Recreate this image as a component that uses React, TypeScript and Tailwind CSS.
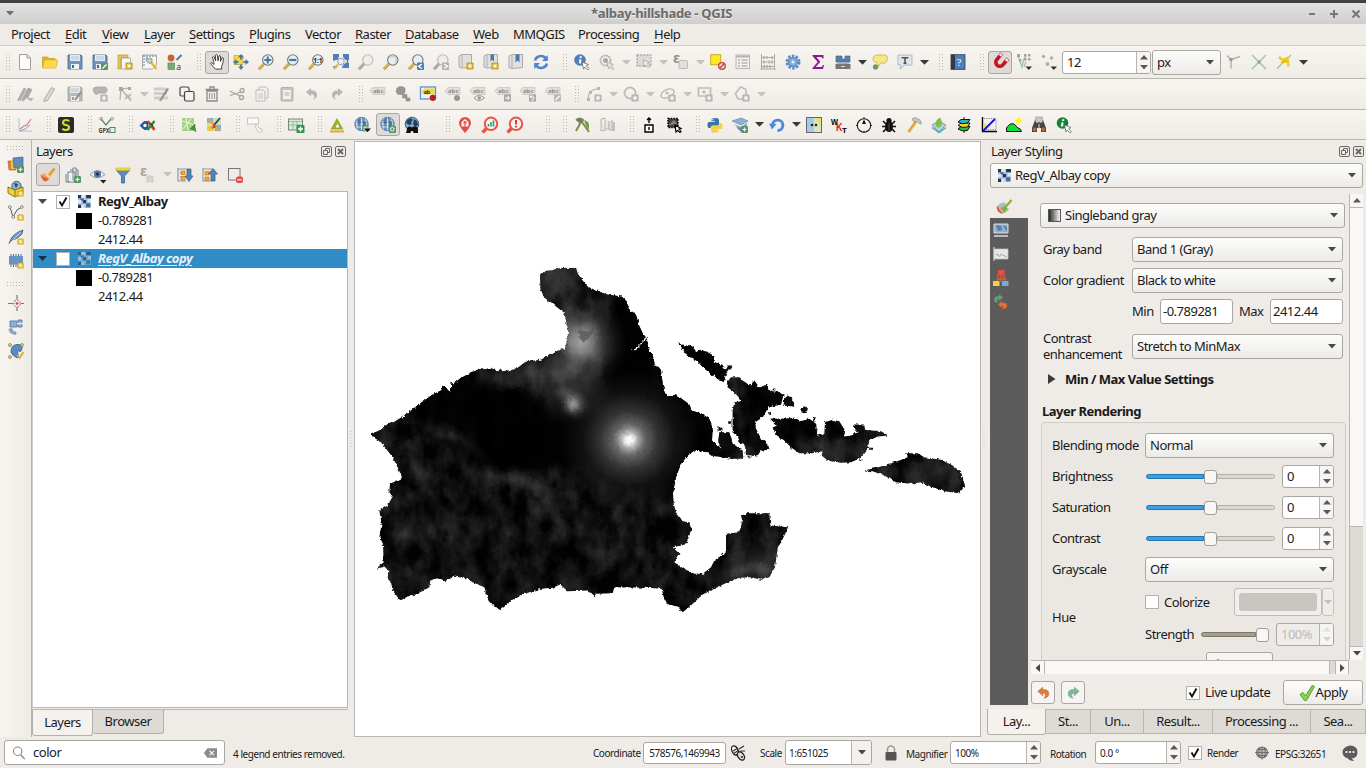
import React from "react";

const star = (c = "#c9a51c", x = 12, y = 12) => (
  <g>
    <rect x={x - 3.6} y={y - 3.6} width="7.2" height="7.2" rx="1.2" fill={c} />
    <path d={`M${x - 2.3} ${y}h4.6M${x} ${y - 2.3}v4.6M${x - 1.6} ${y - 1.6}l3.2 3.2M${x + 1.6} ${y - 1.6}l-3.2 3.2`} stroke="#fff" strokeWidth=".9" />
  </g>
);
const plus = (
  <g>
    <rect x="9" y="9" width="7" height="7" rx="1.2" fill="#5a9368" />
    <path d="M10.5 12.5h4M12.5 10.5v4" stroke="#fff" strokeWidth="1.2" />
  </g>
);
const yBox = <rect x="10" y="10" width="5" height="5" rx=".6" fill="#f6e788" stroke="#c9a317" strokeWidth="1.2" />;
const lens = (fill: string, handle: string, rim: string) => (
  <g>
    <path d="M1 15.2L6 9.8" stroke="#777" strokeWidth="2.6" />
    <path d="M1 15L5.6 10.2" stroke={handle} strokeWidth="1.7" />
    <circle cx="9.8" cy="6" r="5.2" fill={fill} stroke={rim} strokeWidth="1.1" />
  </g>
);
const zoomL = lens("#e9eef2", "#f0c020", "#777");
const greyL = lens("#efedea", "#b9b7b4", "#bdbbb8");
const cursor = (x: number, y: number, f = "#fff", s = "#666") => (
  <path transform={`translate(${x} ${y})`} d="M0 0l6.5 2.6-2.4 1.1 2.9 3-1.3 1.3-3-3L1.500 7z" fill={f} stroke={s} strokeWidth=".8" />
);
const arrows4 = (c: string) => (
  <g fill={c}>
    <path d="M8 0l3 3.500H9v2H7v-2H5zM8 16l3-3.500H9v-2H7v2H5zM0 8l3.500-3v2h2v2h-2v2zM16 8l-3.500-3v2h-2v2h2v2z" />
  </g>
);
const floppy = (c: string, d: string) => (
  <g>
    <path d="M1 1h13l1 1v13H1z" fill={c} stroke={d} strokeWidth=".8" />
    <rect x="3" y="1" width="10" height="6" fill="#e6ebf0" />
    <path d="M4 3h8M4 5h8" stroke="#aeb9c4" strokeWidth=".8" />
    <rect x="4" y="10" width="8" height="5" fill="#f1f1f1" />
    <rect x="5" y="11" width="2" height="3" fill={d} />
  </g>
);
const tag = (c = "#e1dfdc") => (
  <g>
    <path d="M0 5l3-3.500h12v7H3z" fill={c} stroke="#c3c1be" strokeWidth=".7" />
    <text x="3" y="7.300" fontSize="6" fontWeight="bold" fill="#8d8b88" fontFamily="Noto Sans" letterSpacing="0">abc</text>
  </g>
);
const globe = (
  <g>
    <circle cx="7.500" cy="7" r="7" fill="#5e8fc1" />
    <path d="M7.500 0v14M1 4h13M.5 7h14M1 10h13M4 1q-3 6 0 12M11 1q3 6 0 12" stroke="#d9e5f0" strokeWidth=".9" fill="none" />
    <path d="M3 3l3-1 1 3-2 4zM8.500 3l3 1 1 4-3 2z" fill="#4c5f70" opacity=".75" />
    <circle cx="7.500" cy="7" r="6.700" fill="none" stroke="#41617f" strokeWidth=".6" />
  </g>
);
const world = (
  <g>
    <circle cx="8" cy="7" r="6.800" fill="#87abd0" stroke="#294361" strokeWidth=".8" />
    <path d="M3 3l4-2 2 2-2 2 1 2-3 1-3-2zM10 2l3 2 1 4-3 2-2-3z" fill="#25405e" />
  </g>
);
const pin = (
  <g>
    <path d="M8 0a6 6 0 0 1 6 6C14 9.800 8 16 8 16S2 9.800 2 6A6 6 0 0 1 8 0z" fill="#de5046" />
    <path d="M8 2l3.500 3v4.500h-7V5z" fill="#fff" opacity=".9" />
    <path d="M8 4v5.500M6.500 6L8 4.500 9.500 6" stroke="#de5046" strokeWidth="1.200" fill="none" />
  </g>
);
const redLens = (
  <g>
    <path d="M.5 15.500l5-5" stroke="#e9544b" strokeWidth="3.400" />
    <circle cx="9" cy="6.800" r="6.200" fill="#f7f3f2" stroke="#e9544b" strokeWidth="2" />
  </g>
);
const gs = "#b8b6b3";
const bino = (c: string, y = 0) => (
  <g transform={`translate(0 ${y})`}>
    <path d="M4 3h3l1 2 1-2h3l3 8v4h-5v-4H6v4H1v-4z" fill={c} />
    <circle cx="3.700" cy="12.500" r="1.900" fill="#b86a37" /><circle cx="12.300" cy="12.500" r="1.900" fill="#b86a37" />
  </g>
);

const icons: Record<string, React.ReactNode> = {
  new: <path d="M2.500.500h7.500l3.500 3.500v11.500h-11zM10 .5v3.500h3.500" fill="#fcfcfb" stroke="#a2a09d" strokeWidth="1" />,
  open: <><path d="M.5 14V3h5l1.500 1.500h6V6" fill="#e0b32c" stroke="#c99f20" strokeWidth=".8" /><path d="M.5 14L2.500 6H15.500l-1.700 8z" fill="#ffd94d" stroke="#dcb32e" strokeWidth=".8" /></>,
  save: floppy("#6d96c3", "#45668b"),
  saveas: <>{floppy("#6d96c3", "#45668b")}<rect x="9" y="9" width="7" height="7" rx="1" fill="#5a9368" /><path d="M10.500 14.500l4-4" stroke="#fff" strokeWidth="1.300" /></>,
  layout: <><path d="M1 1h10v3H4v11H1z" fill="#e2c55d" stroke="#b08d20" strokeWidth=".6" /><path d="M4.500 4h9v11h-9z" fill="#f6f6f6" stroke="#999" strokeWidth=".7" />{star()}</>,
  layoutman: <><path d="M.5 1h14v10l-4 4H.5z" fill="#f5f5f4" stroke="#9b9a98" strokeWidth=".8" /><path d="M1 2h13M2 1v12" stroke="#7ba0c8" strokeWidth="1.300" strokeDasharray="2 1" /><path d="M8 7l6.500 8" stroke="#e3ba37" strokeWidth="2.600" /><path d="M5 3l1 2.500 2-1.500 2 1v3L8 9.500 5 8 4 5z" fill="#cfcfcf" stroke="#777" strokeWidth=".7" /></>,
  style: <><circle cx="4" cy="4" r="3.400" fill="#cc6138" /><path d="M9.500 6l5-5" stroke="#4a79ad" strokeWidth="1.900" /><rect x="1" y="9" width="6.500" height="6.500" fill="#7fa86e" stroke="#5b8a65" strokeWidth=".7" /><text x="9.300" y="15.500" fontSize="8.500" fontFamily="Noto Sans" fill="#333">a</text></>,
  hand: <path d="M5 9L3.500 3q1-1.300 1.900 0L6.600 7 6.500 1.200q1-1.200 1.900 0L9 7l.9-5q1-.9 1.700.2L11.500 7.500l1.400-3.700q1-.6 1.500.3 0 5-1.700 8v3H6.500L1.300 9.500q.6-1.300 1.900-.5L5 10.500z" fill="#fff" stroke="#333" strokeWidth=".9" />,
  panfeat: <><path d="M1 1.500h9v9H1z" fill="#f3d844" stroke="#b99c17" strokeWidth=".6" />{arrows4("#4e78ab")}</>,
  zin: <>{zoomL}<path d="M6.300 6h7M9.800 2.500v7" stroke="#4677ad" strokeWidth="2.100" /></>,
  zout: <>{zoomL}<path d="M6.300 6h7" stroke="#4677ad" strokeWidth="2.300" /></>,
  z11: <>{zoomL}<text x="5.200" y="8.600" fontSize="6.500" fontWeight="bold" fontFamily="Noto Sans" fill="#222" letterSpacing="0">1:1</text></>,
  zfull: <><path d="M1 1h13.500v12H1z" fill="none" stroke="#4e7fb7" strokeWidth="1.500" strokeDasharray="4 5" /><path d="M0 0h6v2.500L4.500 6H0zM10 0h6v6h-3.500L10 3zM16 14h-5.500l-.5-3 2.500-2H16z" fill="#4e7fb7" /><path d="M1 15l4-4.500" stroke="#e2b92b" strokeWidth="1.900" /><circle cx="8" cy="7.500" r="3.300" fill="#e9eef2" stroke="#888" strokeWidth=".8" /></>,
  zsel: <>{greyL}</>,
  zlayer: <>{zoomL}<path d="M6.500 3h6.500v6" fill="none" stroke="#b9c4cc" /></>,
  zlast: <>{zoomL}<rect x="9" y="8.500" width="7" height="7.500" rx=".8" fill="#4e7fb7" /><path d="M14 10l-3.500 2.200L14 14.500" fill="none" stroke="#fff" strokeWidth="1.300" /></>,
  znext: <>{greyL}<rect x="9" y="8.500" width="7" height="7.500" rx=".8" fill="#b5b3b0" /><path d="M11 10l3.500 2.200L11 14.500" fill="none" stroke="#fff" strokeWidth="1.300" /></>,
  newmap: <><path d="M1 2l3-1.500h9.500v13L4 14 1 13z" fill="#dfe1e1" stroke="#a3a3a1" strokeWidth=".9" /><path d="M4 1v12" stroke="#a3a3a1" strokeWidth=".8" />{star()}</>,
  newbook: <><path d="M1 2l3-1.500h10.500v13L4 14 1 13z" fill="#dfe1e1" stroke="#a3a3a1" strokeWidth=".9" /><path d="M4 1v12" stroke="#a3a3a1" strokeWidth=".8" /><path d="M7.500.5h3.500v7L9.200 5.800 7.500 7.500z" fill="#4677ad" />{star()}</>,
  books: <><path d="M1 2l3-1.500h10.500v13L4 14.500 1 13.500z" fill="#dfe1e1" stroke="#a3a3a1" strokeWidth=".9" /><path d="M4 1v13" stroke="#a3a3a1" strokeWidth=".8" /><path d="M7.500.5h4v8L9.500 6.500 7.500 8.500z" fill="#4677ad" /></>,
  refresh: <><path d="M2 6.500A6 5.500 0 0 1 12.500 4M14 9.500A6 5.500 0 0 1 3.500 12" fill="none" stroke="#4c86c6" strokeWidth="2.600" /><path d="M14.800 1v6H9zM1.200 15V9H7z" fill="#4c86c6" /></>,
  ident: <><circle cx="6" cy="6" r="5.800" fill="#4c80b7" /><path d="M6.700 2.300v1.600M6.200 5.300v4.300" stroke="#fff" strokeWidth="2" />{cursor(8, 8)}</>,
  action: <><circle cx="6.500" cy="6.500" r="5" fill="none" stroke={gs} strokeWidth="2" strokeDasharray="2 .6" /><circle cx="6.500" cy="6.500" r="2.500" fill="#a9a7a4" />{cursor(8, 8, "#e5e3e0", "#a9a7a4")}</>,
  select: <><rect x="1" y="1" width="14" height="11" fill="#dddbd8" stroke="#aaa8a5" strokeWidth="1.300" strokeDasharray="2 1.200" />{cursor(7, 6, "#f3f1ee", "#a5a3a0")}</>,
  eps: <><text x="0" y="9" fontSize="14" fontWeight="bold" fontFamily="Noto Sans" fill="#93918e">ε</text><rect x="6" y="6.500" width="8.500" height="8" rx="1" fill="#e1dfdc" stroke="#bebcb9" /></>,
  desel: <><rect x=".7" y=".7" width="10" height="10" fill="#ffe62e" stroke="#c5a915" strokeWidth=".9" /><circle cx="12" cy="12" r="3.300" fill="#f3dada" stroke="#d23b3b" strokeWidth="1.300" /><path d="M9.800 14.200l4.400-4.400" stroke="#d23b3b" strokeWidth="1.300" /></>,
  table: <><rect x="1" y="1" width="13.500" height="13.500" fill="#f2f0ed" stroke={gs} /><path d="M1 2.500h13" stroke={gs} strokeWidth="2" /><path d="M3 6h2M6.500 6h6M3 9h2M6.500 9h6M3 12h2M6.500 12h6" stroke={gs} strokeWidth="1.500" /></>,
  abacus: <><path d="M1.500 0v16M14.500 0v16M1 3.500h14M1 8h14M1 12.500h14M.5 15h15" stroke="#aaa8a5" strokeWidth="1" fill="none" /><path d="M4 2v3M7 2v3M12 2v3M4 6.500v3M9 6.500v3M12 6.500v3M4 11v3M7 11v3M10 11v3" stroke="#bab8b5" strokeWidth="1.900" /></>,
  gear: <><circle cx="8" cy="8" r="6" fill="none" stroke="#5d8fc6" strokeWidth="3" strokeDasharray="2.500 1.270" /><circle cx="8" cy="8" r="4.500" fill="#85acd8" stroke="#5d8fc6" strokeWidth="1.500" /><circle cx="8" cy="8" r="1.500" fill="#eee" /></>,
  sigma: <path d="M2.500 1h11v3.500h-1l-1-1.500H6.300l4 4.700-4.600 5.300h6l1.300-2h1L13 15H2.500v-1l5.200-6-5.200-6z" fill="#8d1b8f" />,
  toolbox: <><path d="M1 2h6v3h3V2h5v6H1z" fill="#5880ab" stroke="#3d5c80" strokeWidth=".6" /><path d="M2 8h12v2H2z" fill="#9cb5cf" /><rect x=".5" y="10" width="15" height="5" fill="#777" /><path d="M6 12.500h4" stroke="#ddd" /></>,
  tip: <><path d="M4 1h9q2.500.5 2.500 3.500T13 9H9l-3 4-.5-4.200Q1 8 1 5t3-4z" fill="#f7e78b" stroke="#cbb84f" strokeWidth=".9" /><circle cx="3.500" cy="13" r="2.300" fill="#6b9a6b" stroke="#4d7a4d" strokeWidth=".6" /></>,
  textann: <><path d="M1 1h14v10H8l-5 4 1-4H1z" fill="#dfe6ee" stroke="#aab4c0" strokeWidth=".9" /><path d="M4.500 3.700h7M8 4v5.500M6.500 9.300h3" stroke="#555" strokeWidth="1.600" /></>,
  help: <><rect x="1" y=".7" width="14" height="14.600" fill="#4e7fb7" stroke="#303a48" strokeWidth=".8" /><rect x="1" y=".7" width="4" height="14.600" fill="#303a48" /><text x="6.500" y="12" fontSize="11" fontFamily="Liberation Serif" fill="#fff">?</text></>,
  magnet: <g transform="rotate(40 8 8)"><path d="M4 3v5.300a4 4 0 0 0 8 0V3" fill="none" stroke="#c41420" strokeWidth="3.600" /><path d="M4 .8v2.500M12 .8v2.500" stroke="#e9e6e6" strokeWidth="3.200" /><path d="M2.200 3V.6h3.600V3M10.200 3V.6h3.600V3" fill="none" stroke="#c46" strokeWidth=".7" /></g>,
  snapv: <><path d="M2 2l4 11 2-8 2-3" fill="none" stroke="#9cc3a1" strokeWidth="1.300" /><path d="M8 13l2-5" stroke="#9cc3a1" strokeWidth="1.300" /><g fill="#a5a3a0"><path d="M1 0h3v3H1zM3 5h2.500v2.500H3zM8 0h2.500v2.500H8zM12 0h2.500v2.500H12zM8 4h2.500v2.500H8zM12 4h2.500v2.500H12z" /></g><path d="M9.500 12.500h6.500l-3.200 3.500z" fill="#333" /></>,
  dots: <><g fill="#b0aeab"><circle cx="2.500" cy="2.500" r="1.700" /><circle cx="10.500" cy="4" r="1.700" /><circle cx="6.500" cy="10" r="1.900" /></g><path d="M9.500 12.500h6.500l-3.200 3.500z" fill="#333" /></>,
  topo: <><path d="M1 1.500l4 4v9M5 5.500l9-3" fill="none" stroke="#9cc3a1" strokeWidth="1.500" /><circle cx="5" cy="5.500" r="1.800" fill="#999" /></>,
  cross: <><path d="M1 1l14 14M15 1L1 15" stroke="#9fc9a5" strokeWidth="1.500" /><circle cx="8" cy="8" r="1.700" fill="#999" /></>,
  crossy: <><path d="M1 14.500L15 1" stroke="#9fc9a5" strokeWidth="1.500" /><path d="M3 3l3.500 3 5-2 1 8.500" fill="none" stroke="#f0cb18" strokeWidth="2.400" /><path d="M4 9l5-4 3 3-4 1z" fill="#e6b90e" /></>,

  pencils: <><path d="M1 13.500L7 2l2 1-5.500 11L1 15zM5 13.500L11 2l2 1-5.500 11L5 15zM8.500 11L12.500 2.500l2.500 1-4.500 9z" fill="#b3b1ae" stroke="#a09e9b" strokeWidth=".6" /><path d="M10 12h7l-3.500 3.500z" fill="#b8b6b3" /></>,
  pencil: <path d="M2 13.500L9.500 1.500l3 1.500-7 11.500L2 15.500z" fill="#dcdad7" stroke="#aaa8a5" strokeWidth="1" />,
  gsave: <>{floppy("#bbb9b6", "#a09e9b")}<path d="M8 14l6-8" stroke="#8e8c89" strokeWidth="2" /></>,
  addpoly: <><path d="M1 4q0-3 4-3h8q3 1 2 4t-4 2H7q-2 2-4 1z" fill="#b7b5b2" stroke="#a3a19e" strokeWidth=".7" />{star("#b5b3b0")}</>,
  vertex: <><path d="M3 14L4 3l9-1M4 3l10 12" fill="none" stroke="#b8b6b3" strokeWidth="1.300" /><path d="M2 1h4v4H2zM11 1h3v3h-3z" fill="#aaa8a5" /><path d="M7 6l4 3 4-2-2 4 2 3-4-2-4 2 2-4z" fill="#bcbab7" /></>,
  multi: <><path d="M0 3h12M0 7.500h13M0 12h14" stroke="#cfcdca" strokeWidth="3.200" /><path d="M5 15L13 2l2 1-8 12z" fill="#8e8c89" /></>,
  copy2: <><rect x="1" y="1" width="9" height="9" rx="1.500" fill="none" stroke="#444" strokeWidth="1.200" /><rect x="5.500" y="5.500" width="9.500" height="9.500" rx="1.500" fill="#f3f0ed" stroke="#444" strokeWidth="1.200" /></>,
  trash: <><path d="M3 5h10v10H3zM1.500 3.500h13M6 3V1h4v2" fill="none" stroke="#8d8b88" strokeWidth="1.300" /><path d="M5.500 7v6M8 7v6M10.500 7v6" stroke="#9b9996" strokeWidth="1.100" /></>,
  cut: <><path d="M1 5l10 5M1 9.500L12 6" stroke="#a5a3a0" strokeWidth="1.300" /><circle cx="13" cy="4.500" r="2" fill="none" stroke="#a5a3a0" strokeWidth="1.300" /><circle cx="12.500" cy="11.500" r="2" fill="none" stroke="#a5a3a0" strokeWidth="1.300" /></>,
  gcopy: <><path d="M5 1h7l2 2v9H5z" fill="#f3f0ed" stroke={gs} strokeWidth=".9" /><path d="M2 4h7l2 2v9H2z" fill="#f3f0ed" stroke={gs} strokeWidth=".9" /><path d="M4 8h5M4 10h5M4 12h5" stroke={gs} strokeWidth=".8" /></>,
  paste: <><rect x="2" y="1.500" width="12" height="13.500" rx="1" fill="#c5c3c0" stroke="#b3b1ae" /><rect x="4" y="4" width="8" height="9" fill="#f3f0ed" /><path d="M5.500 7h5M5.500 9h5M6 1.500h4" stroke="#b3b1ae" /></>,
  undo: <path d="M2 6l5-4v2.500q6-.5 6 4.500 0 3-4 5 2-3 1-4.500T7 8v2.500z" fill={gs} />,
  redo: <path d="M14 6L9 2v2.500Q3 4 3 9q0 3 4 5-2-3-1-4.500T9 8v2.500z" fill={gs} />,
  tagA: tag(),
  blobs: <><path d="M2 2l3-1.500 3 .5 2 1v4l-1.500 2.500H12v3.500h3v3h-4v-3H7.500V8.500H3L1 6z" fill="#999794" stroke="#8a8885" strokeWidth=".6" /></>,
  tagY: <><rect x=".5" y="1" width="15" height="12" fill="#f3f1ee" stroke="#5d8fd6" strokeWidth="1.300" /><path d="M1.500 6l3-3.500h10v6h-10z" fill="#efd93a" /><text x="3.500" y="8" fontSize="6" fontWeight="bold" fontFamily="Noto Sans" fill="#333">ab</text><circle cx="12.800" cy="11.800" r="3.100" fill="#b41f24" /></>,
  tagP: <>{tag()}<circle cx="12" cy="12" r="3" fill="#999794" /></>,
  tagE: <>{tag()}<path d="M4 12q5-5 10.500 0-5.500 5-10.500 0z" fill="#f1efec" stroke="#999794" /><circle cx="9.300" cy="12" r="1.700" fill="#999794" /></>,
  tagM: <>{tag()}<rect x="9" y="8.500" width="7" height="7" fill="#aaa8a5" /><path d="M10 12h4.500M12.500 10l2 2-2 2" stroke="#fff" fill="none" /></>,
  tagR: <>{tag()}<rect x="9" y="8.500" width="7" height="7" fill="#aaa8a5" /><path d="M10.500 11a2 2 0 1 1 1 3M10.500 9.500v2h2" stroke="#fff" fill="none" /></>,
  tagC: <>{tag()}<rect x="9" y="8.500" width="7" height="7" fill="#bab8b5" /><path d="M10.500 14l4-4" stroke="#fff" strokeWidth="1.300" /></>,
  curve: <><path d="M2 14Q2 3 12 3" fill="none" stroke={gs} strokeWidth="1.200" /><path d="M1 12h3v3H1zM3 5h3v3H3zM11 1h3v3h-3z" fill={gs} />{star("#b5b3b0")}</>,
  circ: <><circle cx="7" cy="7" r="5.500" fill="none" stroke="#bebcb9" strokeWidth="1.800" />{star("#b5b3b0")}</>,
  ell: <><ellipse cx="7.500" cy="7.500" rx="7" ry="4" transform="rotate(-25 7.500 7.500)" fill="none" stroke={gs} strokeWidth="1.300" /><circle cx="7" cy="7" r="1.500" fill={gs} />{star("#b5b3b0")}</>,
  rect: <><path d="M1.500 2h12v8H1.500z" fill="none" stroke="#bebcb9" strokeWidth="1.700" /><circle cx="7" cy="6" r="1.600" fill={gs} />{star("#b5b3b0")}</>,
  pent: <><path d="M6.500 1l5 2 1 5-4 5H4L1.500 7.500z" fill="none" stroke="#bebcb9" strokeWidth="1.700" />{star("#b5b3b0")}</>,

  plot: <><path d="M2 1v13h13" fill="none" stroke="#aeb7c6" strokeWidth=".9" /><path d="M3 12l4-3 3-1 4-6" fill="none" stroke="#e3757d" strokeWidth="1.200" /><path d="M3 14q5-1 10-6" fill="none" stroke="#9b8fd8" strokeWidth="1" /></>,
  s: <><rect width="16" height="16" rx="2" fill="#2b2b2b" /><path d="M11 4.500Q10.500 3 8 3T5 5.400Q5 7.500 8 8t3 2.600Q11 13 8 13t-3.300-1.500" fill="none" stroke="#d3da21" strokeWidth="2.200" /></>,
  gpx: <><path d="M2 2l5 6 5-6" fill="none" stroke="#568a5e" strokeWidth="1.300" /><circle cx="2" cy="1.700" r="1.400" fill="none" stroke="#888" strokeWidth=".8" /><circle cx="13" cy="1.700" r="1.400" fill="none" stroke="#888" strokeWidth=".8" /><text x="-.5" y="15.500" fontSize="6.500" fontWeight="bold" fontFamily="Noto Sans" fill="#444" letterSpacing="0" textLength="11" lengthAdjust="spacingAndGlyphs">GPX</text><rect x="11" y="10.500" width="5" height="5" fill="#e8f2e8" stroke="#4e8a55" /></>,
  gcx: <><path d="M0 8.500l4-4h4v8H4z" fill="#1c5aa5" stroke="#123a6a" strokeWidth=".6" /><circle cx="5" cy="8.500" r="1.700" fill="#fff" /><path d="M7.500 4l7 9" stroke="#d83b2d" strokeWidth="2.600" /><path d="M14.500 4l-7 9" stroke="#2a8c3a" strokeWidth="2.400" /><path d="M10 5.500l4 5" stroke="#222" strokeWidth=".8" /></>,
  mapg: <><path d="M1 1h12v13H1z" fill="#a9d088" /><path d="M1 4l12 4M5 1l2 12M10 2L2 12" stroke="#e6f1d8" strokeWidth="1.200" /><path d="M9 12l5-5v3l1 5-2-2z" fill="#3d9440" stroke="#2d6f30" strokeWidth=".5" /></>,
  mapc: <><path d="M1 1h14v13H1z" fill="#cfe0b8" /><path d="M1 1h6v5H1zM9 8h6v6H9z" fill="#7fb2e2" /><path d="M1 9h6v5H1z" fill="#f0c648" /><path d="M2 2l12 12M12 4L5 11" stroke="#f5a03a" strokeWidth="2" /><path d="M14 1L8 8" stroke="#2c3e66" strokeWidth="1.700" /><path d="M8 7l2 3-4 2z" fill="#c0392b" /></>,
  rectp: <><rect x=".5" y="1" width="11" height="6" fill="#fbfaf9" stroke="#c1bfbc" strokeWidth=".9" /><path d="M9 7l3 4 3 1v3h-4l-3-5z" fill="#f3f1ee" stroke="#c1bfbc" strokeWidth=".8" /></>,
  grid: <><rect x=".5" y="2" width="14" height="11" fill="#d9ead9" stroke="#6d7d6d" strokeWidth=".9" /><path d="M1 4.500h13M1 8h13M5 5v8M9 5v8" stroke="#8fb295" strokeWidth=".8" /><rect x="8.500" y="8" width="8" height="8" rx="1" fill="#2f9a45" /><path d="M10 12h5M12.500 9.500v5" stroke="#fff" strokeWidth="1.500" /></>,
  tri: <><path d="M8 1l6.500 11.500h-13z" fill="#8fb324" /><path d="M8.500 6.500l2 4h-4z" fill="#fff" /><path d="M1 14.500h14" stroke="#e8a33c" strokeWidth="2" /></>,
  globe1: <>{globe}<rect x="9" y="9" width="5" height="5" fill="#bcd6bc" stroke="#4e8a55" strokeWidth=".8" /><path d="M10 11.500h7l-3.500 3.500z" fill="#111" /></>,
  globe2: <>{globe}<rect x="9" y="9" width="7" height="7" rx="1" fill="#5a9368" /><circle cx="12.300" cy="12.300" r="1.800" fill="none" stroke="#fff" /></>,
  globe3: <>{world}<path d="M3 12q0-3 3-2.500l2 1 2-1q4-.5 4 2.500v4h-4.500l-.5-2h-2l-.5 2H2z" fill="#111" /></>,
  pin,
  rl1: <>{redLens}<path d="M6.500 9.500V7M9 9.500V5M11.500 9.500V3.500" stroke="#2f9a6a" strokeWidth="1.600" /></>,
  rl2: <>{redLens}<path d="M9 3v4.500M9 8.800v1.600" stroke="#e23a31" strokeWidth="2" /></>,
  ham: <><path d="M1 3q4-3 7 0l-1 2 7 10M6 5L1 14" fill="none" stroke="#7c8d4a" strokeWidth="2" /><path d="M9 3q4 1 5 4v6l-3-4z" fill="#6fa04e" /><path d="M1 3l5-2 2 3-4 2z" fill="#777" /></>,
  map3: <><path d="M1 2l4-1v11h3l6 2v-9M1 2v12l5-1" fill="#e7e5e2" stroke={gs} /><path d="M9 4v9M12 3v10M14 5v8" stroke="#bbb9b6" strokeWidth="1.300" /></>,
  lockb: <><path d="M4 8h8v7H4z" fill="#fff" stroke="#000" strokeWidth="1.400" /><path d="M8 6V1M6 3l2-2 2 2M8 10v3" stroke="#000" strokeWidth="1.400" fill="none" /></>,
  selb: <><path d="M2 1.500h10v9H2z" fill="#444" stroke="#000" strokeWidth="1.500" strokeDasharray="1.500 1.200" /><path d="M3 8l5-5 3 4z" fill="#888" /><path d="M9 8l6 3.500-2 .5 2 2.500-1 1-2.500-2L10 15z" fill="#fff" stroke="#000" strokeWidth="1.200" /></>,
  python: <><path d="M8 1q4 0 4 2v4q0 1.500-1.500 1.500h-5Q3.500 8.500 3.500 11H2Q.5 11 .5 8T2 5h6V4.300H4.500V3q0-2 3.500-2z" fill="#3a73a8" /><path d="M8 15.500q-4 0-4-2V10.500Q4 9 5.500 9h5Q12.500 9 12.500 6H14q1.500 0 1.500 3T14 12H8v.6h3.500V14q0 1.500-3.500 1.500z" fill="#f5cf46" /><circle cx="6" cy="2.800" r=".7" fill="#fff" /></>,
  layersp: <><path d="M0 4l9-3 7 3-7 4z" fill="#8fb0d2" stroke="#5f83a9" strokeWidth=".6" /><path d="M2 7l7 3 6-4v2l-6 5z" fill="#7d9cbd" /><path d="M4 10l5 5 4-3" fill="#6d8cad" />{plus}</>,
  undob: <><path d="M3.500 8A5.200 5.200 0 1 1 8.500 13.500" fill="none" stroke="#4a8be0" strokeWidth="2.900" /><path d="M0 6.500l7.500.5L3 12.500z" fill="#4a8be0" /></>,
  split: <><rect x=".5" y=".5" width="15" height="15" fill="#d8e6c0" stroke="#666" /><path d="M1 1h7v14H1z" fill="#a6cbe8" /><path d="M9 1h6v8z" fill="#e8e070" /><circle cx="6" cy="8" r="1.300" fill="#222" /><circle cx="10" cy="8" r="1.300" fill="#222" /></>,
  wkt: <g fontFamily="Liberation Sans" fontWeight="bold" letterSpacing="0"><text x="0" y="7.500" fontSize="9" textLength="7" lengthAdjust="spacingAndGlyphs" fill="#000">W</text><text x="5" y="13.500" fontSize="11" textLength="6.500" lengthAdjust="spacingAndGlyphs" fill="#e01414">K</text><text x="11" y="16" fontSize="8" fill="#000">T</text></g>,
  compass: <><circle cx="8" cy="8.500" r="6.700" fill="none" stroke="#222" strokeWidth="1.100" /><path d="M8 2.500l2 4.500H6z" fill="#111" /><path d="M8 0v2M14 8.500h2M0 8.500h2M8 14v2" stroke="#222" /></>,
  bug: <><ellipse cx="8" cy="9.500" rx="4" ry="5.500" fill="#111" /><circle cx="8" cy="3.500" r="2.600" fill="#111" /><path d="M2 4l3 3M14 4l-3 3M1 9.500H15M2 15l3.500-3.500M14 15l-3.500-3.500" stroke="#111" strokeWidth="1.600" /><path d="M8 6v8" stroke="#777" strokeWidth=".6" /></>,
  hammer: <><path d="M2.500 15L10 4.500" stroke="#e5a72f" strokeWidth="2.800" /><path d="M6 2l3-1.500 5 2.500 1.500 4-2-.5-2.500-2-3 .5z" fill="#c9cac8" stroke="#8b8b89" strokeWidth=".7" /></>,
  gl: <><path d="M1 8l7-4 7 4-7 7z" fill="#b4cfe0" stroke="#7a9fb5" /><path d="M1 10.500L8 15.500l7-5" fill="none" stroke="#5aa7b5" strokeWidth="1.500" /><path d="M5 9Q3 4 9 .5q4 6 0 9.500-2 1.500-4-1z" fill="#7cc04b" /></>,
  stack: <><path d="M8 0v16" stroke="#e01414" strokeWidth="1.300" /><g stroke="#111" strokeWidth="1"><path d="M2 12l3-2.500h9L11.500 13.500q-5 1.500-9.500-1.500z" fill="#25c04b" /><path d="M2 8.500L5 6h9l-2.500 4q-5 1.500-9.500-1.500z" fill="#f5d321" /><path d="M2 5l3-2.500h9L11.500 6Q6 8 2 5z" fill="#27b8c6" /></g></>,
  graph: <><path d="M1.500 0v14.500H16" fill="none" stroke="#000" strokeWidth="1.400" /><path d="M3 1.500h12v11H3" fill="none" stroke="#777" strokeWidth=".8" strokeDasharray="1.300 1" /><path d="M2 5l5 4-5 4z" fill="#e9e056" /><path d="M2 14L14 2" stroke="#1313e0" strokeWidth="1.800" /></>,
  hill: <><path d="M.5 14.500V11Q4 5.500 8 7l4 4q3 .5 3.500 3.500z" fill="#12dd35" stroke="#111" /><circle cx="12.500" cy="3.500" r="2" fill="#fff023" /><path d="M12.500 0v7M9 3.500h7M10 1l5 5M15 1l-5 5" stroke="#fff023" strokeWidth=".8" /></>,
  bino: <>{bino("#444")}<path d="M4.500 0h7v4l-1 2-2.500-1-2.500 1-1-2z" fill="#c5c5c5" stroke="#999" strokeWidth=".6" /><path d="M8 7v5" stroke="#ddd" strokeWidth="1" /></>,
  infog: <><circle cx="6.500" cy="6" r="5.800" fill="#17813a" /><path d="M7.200 2.300v1.700M6.500 5.300L6 9.500" stroke="#fff" strokeWidth="2.100" />{cursor(8.500, 8)}</>,

  lAdd: <><path d="M0 4h8v9H1z" fill="#e08034" stroke="#a9561c" strokeWidth=".6" /><path d="M3 3h9v9H3z" fill="#e9c63f" /><path d="M5 1l10-1v10l-9 1z" fill="#5c8bc0" stroke="#3d668f" strokeWidth=".7" />{plus}</>,
  lBox: <><circle cx="8.500" cy="5" r="4.700" fill="#8fb1d4" stroke="#2f4c6b" strokeWidth=".8" /><path d="M6 2l4 1-2 4z" fill="#25405e" /><path d="M0 6l7 3 8-3v6l-8 4-7-4z" fill="#f2d23b" stroke="#6b5a12" strokeWidth=".8" /><path d="M7 9v6" stroke="#6b5a12" strokeWidth=".8" />{yBox}</>,
  lVec: <><path d="M2 2l3 10 4-7 5-3" fill="none" stroke="#556" strokeWidth="1" /><g fill="#eee" stroke="#777" strokeWidth=".8"><circle cx="1.800" cy="2" r="1.400" /><circle cx="13.800" cy="2" r="1.400" /><circle cx="5.300" cy="12" r="1.400" /></g>{yBox}</>,
  lFeather: <><path d="M1 15Q3 5 15 1q0 5-6 8-3 2-5 2z" fill="#6f9bcb" stroke="#34567c" strokeWidth=".8" /><path d="M1 15L13 3" stroke="#dbe7f3" strokeWidth=".7" />{yBox}</>,
  lChip: <><path d="M3 1v13M5.500 1v13M8 1v13M10.500 1v13M13 1v13" stroke="#4e6f96" strokeWidth="1" /><rect x="1" y="3" width="14" height="8.500" fill="#6a93c4" />{yBox}</>,
  lCross: <><path d="M9 0v4.500M9 12v4M0 8.500h5M13 8.500h3" stroke="#7b7977" strokeWidth="1.200" /><circle cx="9" cy="8.500" r="3.300" fill="none" stroke="#d97b7b" strokeWidth="1.200" strokeDasharray="2 1" /><path d="M7.500 8.500h3M9 7v3" stroke="#d93b3b" strokeWidth="1.200" /></>,
  lPlot: <><path d="M2 2h7v6H2zM10 1h4v7h-4z" fill="#8fb0d2" stroke="#4e7095" strokeWidth=".8" /><path d="M9 4.500h6.500" stroke="#e3ecf4" strokeWidth="1.500" /><path d="M1 10q0 5 7 5.500L8 13l-3-.5-1-3z" fill="#8fa9c4" stroke="#6d8cad" strokeWidth=".6" /></>,
  lGeom: <><path d="M3 9Q3 2 9 1.500t5 4-3 2.500-1 4-6-1z" fill="#5c8bc0" stroke="#2f5684" strokeWidth=".8" /><g fill="#c8d27a" stroke="#7b8a32" strokeWidth=".7"><circle cx="2" cy="2" r="1.500" /><circle cx="14" cy="2" r="1.500" /><circle cx="2" cy="14" r="1.500" /></g><path d="M9 12l2.500 3L15.500 9" fill="none" stroke="#d2b02c" strokeWidth="1.900" /></>,

  brush: <><path d="M8.500 9L14.500 1.500" stroke="#dba52c" strokeWidth="2.800" /><path d="M0 8l6-2 5 4-4 4q-4 1-7-6z" fill="#f0a050" /><path d="M1 9l3 1 5 2-3 2.500q-3 0-5-5.500z" fill="#e35a48" /><path d="M6 6l5 4-1.500 1.500-5-4z" fill="#f5d98a" /></>,
  grp: <><path d="M5 3h8v11" fill="none" stroke="#6d7d86" /><path d="M3 5h7v10H3zM1 7v8h3M8 1h3v12H8z" fill="#edf1f2" stroke="#647680" strokeWidth=".9" />{plus}</>,
  eye: <><path d="M0 7.500Q7 0 15 7.500 7 14 0 7.500z" fill="#f5f5f4" stroke="#8b8987" strokeWidth=".9" /><circle cx="7.500" cy="7" r="3.600" fill="#537ba6" /><circle cx="7.500" cy="7" r="1.500" fill="#1c2e44" /><path d="M10 13h6.500l-3.200 3.500z" fill="#222" /></>,
  filter: <><path d="M1 3h14L9.500 9v7h-3V9z" fill="#5c8bc0" stroke="#3d668f" strokeWidth=".8" /><path d="M1 1h14v2.500H1z" fill="#f1dc4b" stroke="#c8b227" strokeWidth=".6" /></>,
  epsf: <><text x="0" y="9" fontSize="14" fontWeight="bold" fontFamily="Noto Sans" fill="#a5a3a0">ε</text><path d="M7 15V9h6v6h-2v-4H9v4z" fill="#dbd9d6" stroke="#c1bfbc" strokeWidth=".7" /></>,
  expand: <><path d="M1 2h9M1 1v13h8M3 6h4M3 10h4" fill="none" stroke="#8e9aa5" strokeWidth="1.200" /><path d="M4 4h4v3.500H4zM4 9.500h4V13H4z" fill="#f6a53a" stroke="#d17b16" strokeWidth=".7" /><path d="M10 2h4v7h2l-4 5.500L8 9h2z" fill="#5583b5" stroke="#34587f" strokeWidth=".7" /></>,
  collapse: <><path d="M1 2h9M1 1v13h8M3 6h4" fill="none" stroke="#8e9aa5" strokeWidth="1.200" /><path d="M3 4.500h4V8H3zM3 10h4v3.500H3z" fill="#f6a53a" stroke="#d17b16" strokeWidth=".7" /><path d="M9 14h4V7h2.500l-4.500-5.500L6.500 7H9z" fill="#5583b5" stroke="#34587f" strokeWidth=".7" /></>,
  remove: <><rect x="1.500" y="1.500" width="11.500" height="11.500" fill="#efece8" stroke="#777" /><rect x="9" y="9.500" width="7" height="6.500" rx="2" fill="#e5484a" /><path d="M10.500 12.800h4" stroke="#fff" strokeWidth="1.300" /></>,
  symb: <><path d="M1 7l5-3 4 2 2 6-6 3-4-2z" fill="#e7a09a" /><path d="M3 5l5-2 3 4-4 3z" fill="#8fc8cf" /><path d="M5 13l6-4 3 1-5 4z" fill="#e0cf75" /><path d="M9.500 8l6-7" stroke="#9aa83f" strokeWidth="2.300" /><path d="M5 9l4-2 3 3-4 4z" fill="#7ab05c" /><path d="M1 8l2 4 3 2" stroke="#d6483f" strokeWidth="1.500" fill="none" /></>,
  transp: <><path d="M1 2h14v9H1z" fill="#8fb0d2" stroke="#e7e7e7" strokeWidth=".9" /><path d="M3 3l5 1 1 4-4 1zM10 3l4 2v5z" fill="#5a7c9f" /><path d="M1 14h14" stroke="#ddd" strokeWidth="1.500" /></>,
  histo: <><path d="M1 3h14v10H1z" fill="#e7e6e4" stroke="#c7c6c4" strokeWidth=".7" /><path d="M1 1v14" stroke="#ddd" /><path d="M3 8l2 1 1.500 1.500L8.500 8l2 1.500L12 10l1.500 1" fill="none" stroke="#7f9aa8" strokeWidth=".9" /></>,
  rend: <><path d="M5.500 5L4 11M11 5l1.500 6M8.200 5v7M4 9h9" stroke="#c25f34" strokeWidth="1.800" fill="none" /><rect x="5" y="0" width="6.500" height="5" fill="#e64c4a" /><rect x="0" y="11" width="6.500" height="5" fill="#f3cf3a" /><rect x="9" y="11" width="6.500" height="5" fill="#75a8e3" /></>,
  hist: <><path d="M1 6q0-4 5-4V0l4 3.500L6 7V5Q3.500 5 4.500 9 1 8 1 6z" fill="#5f9e77" /><path d="M5 10.500l4-3.500v2q5-1 5 2.500t-5 3.500q2-3 0-3v2z" fill="#e0733a" stroke="#b9552a" strokeWidth=".5" /></>,
  undoO: <path d="M1 6.500L7 1.500v3q7.500-.5 7.500 5 0 4.500-6 5.500 3-3.500 1.500-5T7 8.800V12z" fill="#e2793c" stroke="#bc5c25" strokeWidth=".6" />,
  redoG: <path d="M15 6.500L9 1.500v3Q1.500 4 1.500 9.500q0 4.500 6 5.500-3-3.500-1.500-5T9 8.800V12z" fill="#80b894" stroke="#5b9873" strokeWidth=".6" />,
  check: <path d="M1 9.500L4 7.500l2.500 3.500L13 0.500l2.500 1L7.500 15.500H5.500z" fill="#8ed24f" stroke="#4c9a22" strokeWidth=".9" />,
  search: <><circle cx="6.500" cy="6" r="4.800" fill="none" stroke="#8b8987" strokeWidth="1.300" /><path d="M10 10l4.500 5" stroke="#8b8987" strokeWidth="1.700" /></>,
  clear: <><path d="M1 8l4-5.500h11v11H5z" fill="#8b8b8b" /><path d="M7.500 5.500l5 5M12.500 5.500l-5 5" stroke="#fff" strokeWidth="1.200" /></>,
  mouse: <><ellipse cx="5" cy="5.500" rx="3" ry="5" transform="rotate(-25 5 5.500)" fill="#f5f5f4" stroke="#222" strokeWidth="1.300" /><path d="M3 6l5-3M3 9l6-4M9 4l5-3M6 10l5-4 4 0" stroke="#333" strokeWidth="1.200" fill="none" /><ellipse cx="11" cy="11" rx="3" ry="4.500" transform="rotate(-35 11 11)" fill="#ddd" stroke="#222" strokeWidth="1.300" /><circle cx="12" cy="12" r="1" fill="#222" /></>,
  lock: <><path d="M4.500 7V4.500a3.500 3.500 0 0 1 7 0V7" fill="none" stroke="#9a9896" strokeWidth="1.500" /><rect x="2.500" y="7" width="11" height="8.500" rx="1" fill="#555" /></>,
  crs: <><circle cx="8" cy="7.500" r="6.300" fill="#bdbbb8" stroke="#666" strokeWidth="1.200" /><path d="M8 1v14.500M0 7.500h16M3 4h10M3 11h10M5.500 2q-3 5.500 0 11M10.500 2q3 5.500 0 11" stroke="#666" strokeWidth="1" fill="none" /></>,
  bubble: <><path d="M8 .5q7.500.5 7.500 6.500T9.500 13.500Q12 15 12 16 7 15.500 6 13.500.5 12 .5 7T8 .5z" fill="#5b5b5b" /><circle cx="4.500" cy="7" r="1.100" fill="#fff" /><circle cx="8" cy="7" r="1.100" fill="#fff" /><circle cx="11.500" cy="7" r="1.100" fill="#fff" /></>,
  raster: <g><rect width="16" height="16" fill="#a9c3e2" /><path d="M0 0h4v4H0zM10 0h6v4h-6zM6 6h4v4H6zM0 12h4v4H0z" fill="#25364f" /><path d="M3 3h4v4H3zM10 10h5v5h-5z" fill="#4a6789" /><path d="M4 0h5v4H4zM0 6h4v4H0zM12 5h4v4h-4zM4 12h4v4H4z" fill="#dce8f5" /></g>,
  rasterSel: <g><rect width="16" height="16" fill="#69a6d2" /><path d="M0 0h4v4H0zM10 0h6v4h-6zM6 6h4v4H6zM0 12h4v4H0z" fill="#2b5f8a" /><path d="M3 3h4v4H3zM10 10h5v5h-5z" fill="#3c79a9" /><path d="M4 0h5v4H4zM0 6h4v4H0zM12 5h4v4h-4zM4 12h4v4H4z" fill="#8fc0e2" /></g>,
};

const Ic = ({ n, c = "w-4 h-4" }: { n: string; c?: string }) => (
  <svg viewBox="0 0 16 16" className={`${c} block shrink-0 overflow-visible`}>{icons[n]}</svg>
);
const Tri = ({ c = "#4a4846", d = "M0 0h8L4 4.500z", w = 8, h = 5 }: { c?: string; d?: string; w?: number; h?: number }) => (
  <svg width={w} height={h} className="block shrink-0"><path d={d} fill={c} /></svg>
);
const Up = ({ c = "#5c5a58" }: { c?: string }) => <Tri c={c} d="M0 4.500L4 0l4 4.500z" />;

const GripV = ({ c = "w-4 pl-[9px]" }: { c?: string }) => (
  <div className={`${c} shrink-0`}>
    <svg width="5" height="17" className="block">
      {Array.from({ length: 6 }, (_, i) => <path key={i} d={`M0 ${i * 3 + 0.5}h1M3 ${i * 3 + 0.5}h1`} stroke="#b9b6b2" />)}
    </svg>
  </div>
);
const GripH = () => (
  <svg width="17" height="5" className="block">
    {Array.from({ length: 6 }, (_, i) => <path key={i} d={`M${i * 3} .5h1M${i * 3} 3.500h1`} stroke="#b9b6b2" />)}
  </svg>
);

// Toolbar tokens: "|" grip, "v" menu arrow, "x" disabled menu arrow, "*name" pressed button, "_12" spacers.
const Bar = ({ items }: { items: string }) => (
  <>
    {items.split(" ").map((t, i) => {
      if (t === "|") return <GripV key={i} />;
      if (t === "v" || t === "x") return <div key={i} className="flex w-3 shrink-0 pl-0.5"><Tri c={t === "v" ? "#3b3937" : "#c4c2bf"} w={9} d="M0 0h9L4.500 4.800z" /></div>;
      if (t === "_12") return <div key={i} className="w-3 shrink-0" />;
      if (t === "_9") return <div key={i} className="w-[9px] shrink-0" />;
      if (t === "_1") return <div key={i} className="w-px shrink-0" />;
      if (t[0] === "*") return (
        <div key={i} className="w-[25px] shrink-0 pl-px">
          <div className="flex h-[23px] w-6 items-center justify-center rounded-[3px] border border-[#a9a6a3] bg-[#dedad7]"><Ic n={t.slice(1)} /></div>
        </div>
      );
      return <div key={i} className="w-[25px] shrink-0 pl-1"><Ic n={t} /></div>;
    })}
  </>
);

const Combo = ({ children, c }: { children: React.ReactNode; c: string }) => (
  <div className={`${c} flex h-[25px] shrink-0 items-center rounded-[3px] border border-[#aaa7a3] bg-gradient-to-b from-[#fdfdfc] to-[#edebe8] pl-1 pr-[6px]`}>
    <div className="flex flex-1 items-center whitespace-nowrap">{children}</div>
    <Tri />
  </div>
);
const Spin = ({ v, c, off = false }: { v: string; c: string; off?: boolean }) => (
  <div className={`${c} flex h-[23px] shrink-0 overflow-hidden rounded-[3px] border border-[#aaa7a3] ${off ? "bg-[#efedea] text-[#bcbab7]" : "bg-white"}`}>
    <div className="flex flex-1 items-center pl-1">{v}</div>
    <div className="flex w-3.5 flex-col items-center justify-center gap-[5px] border-l border-[#b8b5b1] bg-[#f7f5f3]">
      <Up c={off ? "#e2e0dd" : "#5c5a58"} /><Tri c={off ? "#d4d2cf" : "#5c5a58"} />
    </div>
  </div>
);
const Check = ({ on }: { on?: boolean }) => (
  <div className="h-3.5 w-3.5 shrink-0 border border-[#b3b0ac] bg-white">
    {on && <svg viewBox="0 0 12 12" className="block h-3 w-3"><path d="M2.500 5.500l2.500 4 4.500-8" fill="none" stroke="#111" strokeWidth="1.900" /></svg>}
  </div>
);
const DockButtons = () => (
  <div className="flex gap-[3px]">
    <svg width="11" height="11"><rect x=".5" y=".5" width="10" height="10" rx="1.500" fill="none" stroke="#6b6967" /><path d="M2.500 4.500h4v4h-4zM4.500 4.500v-2h4v4h-2" fill="none" stroke="#6b6967" /></svg>
    <svg width="11" height="11"><rect x=".5" y=".5" width="10" height="10" rx="1.500" fill="none" stroke="#6b6967" /><path d="M3 3l5 5M8 3l-5 5" stroke="#6b6967" strokeWidth="1.900" /></svg>
  </div>
);

const menus: [string, string, string, string][] = [
  ["Pro", "j", "ect", "w-[54px]"], ["", "E", "dit", "w-[37px]"], ["", "V", "iew", "w-[42px]"], ["", "L", "ayer", "w-[45px]"],
  ["", "S", "ettings", "w-[60px]"], ["", "P", "lugins", "w-[56px]"], ["Vect", "o", "r", "w-[50px]"], ["", "R", "aster", "w-[50px]"],
  ["", "D", "atabase", "w-[68px]"], ["", "W", "eb", "w-[40px]"], ["MMQGIS", "", "", "w-[65px]"], ["Pro", "c", "essing", "w-[76px]"], ["", "H", "elp", "w-[40px]"],
];

const mainland = "M30 518L42 514 60 508 80 488 100 484 130 465 160 442 215 402 240 390 243 376 252 378 262 390 270 394 270 370 282 366 300 352 330 336 345 330 358 322 372 326 388 322 402 328 412 332 418 324 425 332 455 328 475 318 495 303 540 298 565 282 600 268 612 264 618 240 622 210 615 180 608 155 590 142 570 125 550 112 538 85 537 45 550 32 580 28 600 22 645 22 650 38 665 60 680 78 710 92 740 102 782 108 797 122 803 145 825 163 832 190 845 218 858 235 862 265 875 280 882 315 900 328 905 370 912 402 925 407 945 405 960 413 985 432 990 450 1020 458 1045 475 1055 505 1053 540 1065 552 1078 565 1072 540 1075 515 1105 515 1108 525 1115 550 1145 570 1147 595 1110 595 1055 586 1040 575 1000 570 980 585 960 610 945 650 936 700 938 730 945 755 965 782 985 785 992 805 985 825 975 852 935 860 955 880 940 905 970 925 1000 940 1025 940 1050 920 1060 900 1095 875 1095 820 1135 815 1142 790 1142 765 1160 758 1225 758 1228 795 1282 800 1270 825 1250 865 1242 920 1225 950 1200 958 1170 950 1135 952 1100 965 1060 985 1025 1002 990 1035 965 1055 950 1038 920 1032 908 1010 902 985 860 982 760 980 755 998 705 1000 700 1008 680 990 620 992 598 972 575 982 540 985 490 1000 450 1020 415 1048 395 1035 382 1020 370 980 335 965 320 955 295 950 280 945 252 962 235 952 208 960 205 980 170 1000 140 1008 118 1020 95 990 90 965 80 955 82 930 70 918 45 925 68 905 66 850 55 830 62 790 55 750 80 735 95 708 85 695 87 668 110 662 125 655 110 620 95 590 60 545 30 525Z";
const islands = "M82 35L98 45 122 45 135 65 150 58 185 72 192 95 215 105 225 118 232 105 245 105 225 130 218 155 180 130 155 110 140 92 108 75ZM228 155L240 140 260 140 290 160 298 165 310 150 325 170 350 162 352 180 385 185 398 190 390 222 352 230 335 260 312 275 315 295 330 325 352 345 355 358 330 360 318 378 285 372 282 345 262 335 262 320 245 305 245 240 250 215 268 212 262 198 245 182 230 170ZM400 205L412 195 428 212 430 228 398 225ZM452 230L462 228 470 238 464 248 452 246ZM485 272l5-12 4 2-6 12zM358 265L400 265 430 262 450 272 475 265 495 280 500 315 520 310 522 275 545 268 565 272 582 300 580 318 600 315 620 305 602 282 640 282 642 298 660 300 690 302 712 315 680 318 655 330 650 355 625 385 600 395 570 397 530 390 512 375 515 362 480 368 445 368 420 350 400 330 375 312 365 292 378 285ZM640 420L690 408 745 390 770 380 765 368 800 368 820 380 870 388 905 405 930 425 942 465 925 488 880 482 845 470 810 455 780 460 735 455 700 435 665 422ZM650 352h16v6h-14zM200 292h14v8h-14zM290 376h6v8h-6zM355 245h5v5h-5zM625 386h9v5h-9zM232 272h10v8h-10zM365 175h8v4h-8z";

const Elevation = () => (
  <svg width="625" height="594" viewBox="355 142 625 594" className="block">
    <defs>
      <clipPath id="land"><path d={mainland} /><path d={islands} transform="translate(870 210)" /></clipPath>
      <radialGradient id="mayon">
        <stop offset="0" stopColor="#fff" /><stop offset=".05" stopColor="#fff" stopOpacity=".96" /><stop offset=".12" stopColor="#fff" stopOpacity=".66" />
        <stop offset=".22" stopColor="#fff" stopOpacity=".39" /><stop offset=".4" stopColor="#fff" stopOpacity=".2" /><stop offset=".65" stopColor="#fff" stopOpacity=".07" /><stop offset="1" stopColor="#fff" stopOpacity="0" />
      </radialGradient>
      <radialGradient id="peak">
        <stop offset="0" stopColor="#fff" stopOpacity=".62" /><stop offset=".2" stopColor="#fff" stopOpacity=".48" /><stop offset=".5" stopColor="#fff" stopOpacity=".19" /><stop offset=".75" stopColor="#fff" stopOpacity=".06" /><stop offset="1" stopColor="#fff" stopOpacity="0" />
      </radialGradient>
      <radialGradient id="haze"><stop offset="0" stopColor="#fff" stopOpacity=".17" /><stop offset="1" stopColor="#fff" stopOpacity="0" /></radialGradient>
      <filter id="coast" x="0" y="0" width="100%" height="100%" colorInterpolationFilters="sRGB">
        <feTurbulence type="fractalNoise" baseFrequency=".3" numOctaves="2" seed="4" />
        <feDisplacementMap in="SourceGraphic" scale="3.500" xChannelSelector="R" yChannelSelector="G" />
      </filter>
      <filter id="relief" x="0" y="0" width="100%" height="100%" colorInterpolationFilters="sRGB">
        <feTurbulence type="fractalNoise" baseFrequency=".02 .013" numOctaves="5" seed="23" />
        <feColorMatrix values="0 0 0 0 1  0 0 0 0 1  0 0 0 0 1  .3 0 0 0 -.095" />
      </filter>
      <filter id="soft" x="-20%" y="-20%" width="140%" height="140%"><feGaussianBlur stdDeviation="9" /></filter>
      <radialGradient id="flat"><stop offset="0" stopColor="#000" stopOpacity=".95" /><stop offset=".65" stopColor="#000" stopOpacity=".85" /><stop offset="1" stopColor="#000" stopOpacity="0" /></radialGradient>
    </defs>
    <g filter="url(#coast)">
      <g transform="translate(361 260.500) scale(.33333)">
        <g clipPath="url(#land)" shapeRendering="crispEdges">
          <rect width="1830" height="1080" fill="#020202" />
          <rect width="1830" height="1080" filter="url(#relief)" />
          <ellipse cx="370" cy="450" rx="330" ry="95" fill="url(#flat)" transform="rotate(10 370 450)" />
          <ellipse cx="500" cy="560" rx="250" ry="90" fill="url(#flat)" />
          <ellipse cx="810" cy="270" rx="100" ry="210" fill="url(#flat)" />
          <ellipse cx="850" cy="520" rx="300" ry="230" fill="url(#flat)" />
          <ellipse cx="1250" cy="460" rx="120" ry="140" fill="url(#flat)" opacity=".7" />
          <ellipse cx="1000" cy="320" rx="120" ry="140" fill="url(#flat)" />
          <ellipse cx="590" cy="60" rx="90" ry="90" fill="url(#haze)" />
          <ellipse cx="1195" cy="920" rx="120" ry="90" fill="url(#haze)" />
          <ellipse cx="1720" cy="640" rx="120" ry="60" fill="url(#haze)" opacity=".7" />
          <ellipse cx="1430" cy="570" rx="120" ry="50" fill="url(#haze)" opacity=".5" />
          <ellipse cx="500" cy="330" rx="160" ry="60" fill="url(#haze)" opacity=".6" />
          <g filter="url(#soft)" fill="none" stroke="#fff" strokeLinecap="round">
            <path d="M410 655Q480 645 530 690" strokeWidth="26" opacity=".11" />
            <path d="M540 690Q600 710 580 760" strokeWidth="50" opacity=".06" />
            <path d="M130 540Q140 610 200 700T330 860" strokeWidth="22" opacity=".08" />
            <path d="M270 520Q330 550 370 590" strokeWidth="14" opacity=".08" />
            <path d="M90 830Q180 800 210 900M140 940L110 870" strokeWidth="18" opacity=".08" />
            <path d="M590 400Q620 380 640 440" strokeWidth="14" opacity=".25" />
            <path d="M1100 950Q1180 900 1230 930" strokeWidth="20" opacity=".12" />
          </g>
          <g filter="url(#soft)" fill="none" stroke="#000" opacity=".6" strokeWidth="9">
            <path d="M120 600Q170 680 240 760T370 950M460 720Q480 800 540 850T530 960M620 980Q640 850 700 780M370 480V760L300 820" />
          </g>
          <ellipse cx="625" cy="390" rx="120" ry="100" fill="url(#haze)" />
          <circle cx="636" cy="432" r="46" fill="url(#peak)" opacity=".85" />
          <ellipse cx="660" cy="245" rx="140" ry="150" fill="url(#peak)" />
          <path d="M652 208l32 8 26-26-20 34-22 24q-14-14-16-40z" fill="#555" opacity=".75" />
          <circle cx="805" cy="538" r="215" fill="url(#mayon)" />
          <path d="M856 232L822 268M815 264h-8" stroke="#fff" strokeWidth="4" />
        </g>
      </g>
    </g>
  </svg>
);

const TreeRow = ({ name, copy }: { name: string; copy?: boolean }) => (
  <>
    <div className={`flex h-[19px] items-center pl-[5px] ${copy ? "bg-[#308cc6] text-[#e4f1fa]" : ""}`}>
      <Tri c={copy ? "#123049" : "#4a4846"} w={10} d="M0 0h9L4.500 5z" />
      <div className="ml-2"><Check on={!copy} /></div>
      <div className="ml-2"><Ic n={copy ? "rasterSel" : "raster"} c="w-[13px] h-[13px]" /></div>
      <span className={`ml-[7px] font-bold ${copy ? "italic underline underline-offset-2" : ""}`}>{name}</span>
    </div>
    <div className="flex h-[19px] items-center pl-[43px]"><div className="h-4 w-4 bg-black" /><span className="ml-1.5">-0.789281</span></div>
    <div className="flex h-[19px] items-center pl-[65px]">2412.44</div>
  </>
);

const Slider = ({ label }: { label: string }) => (
  <div className="flex h-[23px] items-center">
    <div className="w-[94px]">{label}</div>
    <div className="flex h-3.5 w-[129px] items-center">
      <div className="h-[5px] w-[58px] rounded-l-sm border border-[#2475ad] bg-[#3aa0e4]" />
      <div className="h-3.5 w-[13px] rounded-[3px] border border-[#a29f9b] bg-[#f8f7f5]" />
      <div className="h-[5px] w-[58px] rounded-r-sm border border-[#b2afab] bg-[#dad7d3]" />
    </div>
    <div className="ml-[7px]"><Spin v="0" c="w-[52px]" /></div>
  </div>
);

const StyleForm = () => (
  <div className="h-[466px] w-[318px] overflow-hidden pl-[9px] pt-[9px]">
    <Combo c="w-[305px]"><svg width="13" height="13" className="ml-[3px]"><defs><linearGradient id="sg"><stop offset="0" stopColor="#222" /><stop offset="1" stopColor="#fff" /></linearGradient></defs><rect x=".5" y=".5" width="12" height="12" fill="url(#sg)" stroke="#555" /></svg><span className="ml-1">Singleband gray</span></Combo>
    <div className="mt-[9px] flex items-center pl-[3px]"><div className="w-[89px]">Gray band</div><Combo c="w-[211px]">Band 1 (Gray)</Combo></div>
    <div className="mt-1.5 flex items-center pl-[3px]"><div className="w-[89px] whitespace-nowrap">Color gradient</div><Combo c="w-[211px]">Black to white</Combo></div>
    <div className="mt-1.5 flex items-center pl-[92px]">
      <div className="w-7">Min</div><div className="flex h-[25px] w-[73px] items-center rounded-[3px] border border-[#aaa7a3] bg-white pl-0.5">-0.789281</div>
      <div className="ml-1.5 w-[31px]">Max</div><div className="flex h-[25px] w-[73px] items-center rounded-[3px] border border-[#aaa7a3] bg-white pl-0.5">2412.44</div>
    </div>
    <div className="mt-1.5 flex h-[33px] items-center pl-[3px]"><div className="w-[89px] pb-0.5 leading-4">Contrast<br />enhancement</div><Combo c="w-[211px]">Stretch to MinMax</Combo></div>
    <div className="mt-1.5 flex h-5 items-center pl-2 font-bold"><Tri c="#3b3937" w={8} h={10} d="M0 0v10L7.500 5z" /><span className="ml-[9px]">Min / Max Value Settings</span></div>
    <div className="mt-3 h-5 pl-0.5 font-bold leading-5">Layer Rendering</div>
    <div className="ml-px mt-px h-[280px] w-[305px] rounded-sm border border-[#d2cfcb] bg-[#ebe8e4] pl-[10px] pt-[10px]">
      <div className="flex items-center"><div className="w-[93px] whitespace-nowrap">Blending mode</div><Combo c="w-[189px]">Normal</Combo></div>
      <div className="mt-[7px] flex flex-col gap-2"><Slider label="Brightness" /><Slider label="Saturation" /><Slider label="Contrast" /></div>
      <div className="mt-[7px] flex items-center"><div className="w-[93px]">Grayscale</div><Combo c="w-[189px]">Off</Combo></div>
      <div className="mt-1.5 flex items-center">
        <div className="w-[93px]">Hue</div>
        <div className="w-[189px]">
          <div className="flex h-7 items-center"><Check /><span className="ml-[5px]">Colorize</span>
            <div className="ml-auto flex h-7 w-[100px]"><div className="flex flex-1 rounded-[3px] border border-[#c0bdb9] bg-[#f1efec] p-1"><div className="flex-1 rounded-[3px] bg-[#c9c6c2]" /></div><div className="flex w-3 items-center justify-center rounded-[3px] border border-[#c8c5c1] bg-[#efedea]"><Tri c="#c4c2bf" /></div></div>
          </div>
          <div className="mt-[7px] flex h-[23px] items-center"><span className="w-14">Strength</span><div className="h-[5px] w-[55px] rounded-l-sm border border-[#7d776a] bg-[#a59e8f]" /><div className="h-3.5 w-[13px] rounded-[3px] border border-[#a29f9b] bg-[#f8f7f5]" /><div className="ml-auto"><Spin off v="100%" c="w-[58px]" /></div></div>
        </div>
      </div>
      <div className="ml-[154px] mt-[6px] h-6 w-[67px] rounded-[3px] border border-[#aaa7a3] bg-[#f7f5f3]"><div className="ml-2.5 mt-1.5 h-1 w-0.5 bg-[#e27a5c]" /></div>
    </div>
  </div>
);

const rightTabs: [string, string][] = [["St...", "w-[45px]"], ["Un...", "w-[53px]"], ["Result...", "w-[69px]"], ["Processing ...", "w-[98px]"], ["Sea...", "w-[55px]"]];

export default function App() {
  return (
    <div className="flex h-[768px] w-[1366px] flex-col overflow-hidden bg-[#efebe7] font-['Noto_Sans',sans-serif] text-[13px] leading-none tracking-[-0.5px] text-[#1a1a1a]">
      <div className="h-[3px] shrink-0 bg-[#414141]" />
      <div className="flex h-[21px] shrink-0 items-center bg-gradient-to-b from-[#e3e3e3] to-[#cecece]">
        <div className="w-20 pl-1.5"><Tri c="#6f6f6f" /></div>
        <div className="flex-1 pr-[43px] text-center font-bold tracking-[-0.3px] text-[#6c6a68] [text-shadow:0_1px_0_#f0f0f0]">*albay-hillshade - QGIS</div>
        <div className="flex w-20 justify-end gap-3.5 pr-1.5">
          <svg width="8" height="8"><path d="M1 4h6" stroke="#777" strokeWidth="2" /></svg>
          <svg width="8" height="8"><path d="M0 4h8M4 0v8" stroke="#777" strokeWidth="2" /></svg>
          <svg width="8" height="8"><path d="M.5.5l7 7M7.500.5l-7 7" stroke="#777" strokeWidth="2" /></svg>
        </div>
      </div>
      <div className="flex h-[22px] shrink-0 items-center border-b border-[#d3d0cc] pl-[11px]">
        {menus.map(([a, b, c, w]) => <div key={a + b + c} className={`${w} shrink-0 whitespace-nowrap`}>{a}<span className="underline underline-offset-[3px]">{b}</span>{c}</div>)}
      </div>
      <div className="flex h-[33px] shrink-0 items-center border-b border-[#b9b6b2] bg-gradient-to-b from-[#f8f5f1] to-[#efebe7]">
        <div className="-ml-[3px] flex items-center">
          <Bar items="| new open save saveas layout layoutman style | *hand panfeat zin zout z11 zfull zsel zlayer zlast znext newmap newbook books refresh | ident action x select x eps x desel table abacus gear sigma toolbox v tip textann v | help | *magnet snapv dots" />
          <Spin v="12" c="w-[89px]" />
          <div className="ml-px"><Combo c="w-[69px]">px</Combo></div>
          <div className="ml-px flex items-center"><Bar items="topo cross crossy v" /></div>
        </div>
      </div>
      <div className="flex h-[31px] shrink-0 items-center border-b border-[#b9b6b2] bg-gradient-to-b from-[#f8f5f1] to-[#efebe7]">
        <div className="-ml-[3px] flex items-center">
          <Bar items="| pencils pencil gsave addpoly vertex x multi copy2 trash cut gcopy paste undo redo | tagA blobs tagY tagP tagE tagM tagR tagC | curve x circ x ell x rect x pent x" />
        </div>
      </div>
      <div className="flex h-[30px] shrink-0 items-center border-b border-[#b9b6b2] bg-gradient-to-b from-[#f8f5f1] to-[#efebe7]">
        <div className="-ml-[3px] flex items-center">
          <Bar items="| plot | s | gpx | gcx | mapg mapc | rectp | grid | tri globe1 *globe2 globe3 _12 | pin rl1 rl2 _9 | _1 | _1 ham map3 | lockb selb | python layersp v undob v split wkt compass bug hammer gl stack graph hill bino infog" />
        </div>
      </div>

      <div className="flex h-[597px] shrink-0">
        <div className="flex w-8 shrink-0 flex-col items-center border-r border-[#b9b6b2] bg-gradient-to-r from-[#f8f5f1] to-[#efebe7] pt-1.5">
          <GripH />
          <div className="mt-1.5 flex flex-col gap-2">{["lAdd", "lBox", "lVec", "lFeather", "lChip"].map((n) => <Ic key={n} n={n} />)}</div>
          <div className="mb-2 mt-[13px]"><GripH /></div>
          <div className="flex flex-col gap-2">{["lCross", "lPlot", "lGeom"].map((n) => <Ic key={n} n={n} />)}</div>
        </div>

        <div className="w-[316px] shrink-0">
          <div className="flex h-[22px] items-center justify-between pl-1 pr-0.5"><span>Layers</span><DockButtons /></div>
          <div className="flex h-[29px] items-center pb-1 pl-[3px]"><Bar items="*brush _1 grp eye filter epsf x expand collapse remove" /></div>
          <div className="h-[517px] border border-[#b9b6b2] border-l-[#d0cdc9] bg-white">
            <TreeRow name="RegV_Albay" />
            <TreeRow name="RegV_Albay copy" copy />
          </div>
          <div className="mt-px flex border-t border-[#b9b6b2]">
            <div className="flex h-[26px] w-[61px] items-center justify-center rounded-b-[3px] border border-t-0 border-[#b3b0ac] bg-[#f5f2ee]">Layers</div>
            <div className="flex h-6 w-[71px] items-center justify-center rounded-b-[3px] border border-l-0 border-t-0 border-[#b3b0ac] bg-[#dedbd7]">Browser</div>
          </div>
        </div>
        <div className="flex w-1.5 shrink-0 items-center justify-center text-[#c9c6c2]"><svg width="3" height="16"><path d="M1 0v16" stroke="#c5c2be" strokeDasharray="1 2" /></svg></div>
        <div className="mt-px h-[596px] w-[627px] shrink-0 border border-[#b9b6b2] bg-white"><Elevation /></div>
        <div className="flex w-1.5 shrink-0 items-center justify-center"><svg width="3" height="16"><path d="M1 0v16" stroke="#c5c2be" strokeDasharray="1 2" /></svg></div>

        <div className="w-[379px] shrink-0">
          <div className="mb-px flex h-[22px] items-center justify-between pl-1 pr-0.5"><span>Layer Styling</span><DockButtons /></div>
          <div className="pl-[3px]"><Combo c="w-[373px]"><span className="ml-[3px]"><Ic n="raster" c="w-[13px] h-[13px]" /></span><span className="ml-[4px]">RegV_Albay copy</span></Combo></div>
          <div className="mt-1.5 flex pl-[3px]">
            <div className="mt-0.5 flex h-[509px] w-[38px] shrink-0 flex-col">
              <div className="flex h-[22px] items-center pl-1.5"><Ic n="symb" /></div>
              <div className="flex flex-1 flex-col gap-2 bg-[#5c5c5c] pl-[3px] pt-1"><Ic n="transp" /><Ic n="histo" /><Ic n="rend" /><Ic n="hist" /></div>
            </div>
            <div className="ml-[3px] w-[332px]">
              <div className="flex">
                <StyleForm />
                <div className="flex h-[466px] w-3.5 shrink-0 flex-col border-l border-[#b9b6b2] bg-[#dedbd7]">
                  <div className="flex h-[13px] items-center justify-center bg-[#f9f8f6]"><Up /></div>
                  <div className="h-[320px] border-y border-[#b9b6b2] bg-[#f9f8f6]" />
                  <div className="mt-auto flex h-[14px] items-center justify-center border-t border-[#b9b6b2] bg-[#f9f8f6]"><Tri /></div>
                </div>
              </div>
              <div className="flex h-3.5 w-[318px] border-t border-[#b9b6b2] bg-[#dedbd7]">
                <div className="flex w-[13px] items-center justify-center bg-[#f9f8f6]"><Tri w={5} h={8} d="M5 0v8L.5 4z" /></div>
                <div className="w-[286px] border-x border-[#b9b6b2] bg-[#f9f8f6]" />
                <div className="ml-auto flex w-3.5 items-center justify-center border-x border-[#b9b6b2] bg-[#f9f8f6]"><Tri w={5} h={8} d="M0 0v8L4.500 4z" /></div>
              </div>
              <div className="mt-1.5 flex h-[25px] items-center">
                <div className="flex h-[23px] w-6 items-center justify-center rounded-[3px] border border-[#aaa7a3] bg-[#f7f5f3]"><Ic n="undoO" c="w-[13px] h-[13px]" /></div>
                <div className="ml-1.5 flex h-[23px] w-6 items-center justify-center rounded-[3px] border border-[#aaa7a3] bg-[#f7f5f3]"><Ic n="redoG" c="w-[13px] h-[13px]" /></div>
                <div className="ml-[101px]"><Check on /></div><span className="ml-[5px]">Live update</span>
                <div className="ml-auto flex h-[25px] w-20 items-center justify-center rounded-[3px] border border-[#aaa7a3] bg-gradient-to-b from-[#fdfdfc] to-[#edebe8]"><Ic n="check" /><span className="ml-px">Apply</span></div>
              </div>
            </div>
          </div>
          <div className="mt-1 flex">
            <div className="flex h-[26px] w-[59px] items-center justify-center rounded-b-[3px] border border-t-0 border-[#b3b0ac] bg-[#f5f2ee]">Lay...</div>
            {rightTabs.map(([t, w]) => <div key={t} className={`${w} flex h-[25px] items-center justify-center whitespace-nowrap border-b border-r border-t border-[#b9b6b2] bg-[#dedbd7]`}>{t}</div>)}
          </div>
        </div>
      </div>

      <div className="flex h-[31px] items-center pl-1 text-[10px] tracking-[-0.45px]">
        <div className="flex h-[25px] w-[221px] shrink-0 items-center rounded-[3px] border border-[#aaa7a3] bg-white pl-[7px] pr-[7px] text-[13px]"><Ic n="search" c="w-3.5 h-3.5" /><span className="ml-[7px] flex-1">color</span><Ic n="clear" c="w-3.5 h-3.5" /></div>
        <span className="ml-[8px] w-[360px] shrink-0 pt-0.5">4 legend entries removed.</span>
        <span className="w-[50px] shrink-0">Coordinate</span>
        <div className="flex h-[22px] w-[83px] shrink-0 items-center justify-center rounded-[3px] border border-[#aaa7a3] bg-white">578576,1469943</div>
        <div className="ml-1 w-[30px] shrink-0"><Ic n="mouse" /></div>
        <span className="w-[25px] shrink-0">Scale</span>
        <div className="flex h-[25px] w-[87px] shrink-0 overflow-hidden rounded-[3px] border border-[#aaa7a3] bg-white"><span className="flex flex-1 items-center pl-[3px]">1:651025</span><div className="flex w-5 items-center justify-center border-l border-[#b8b5b1] bg-[#f3f1ee]"><Tri /></div></div>
        <div className="ml-[11px] w-[23px] shrink-0"><Ic n="lock" /></div>
        <span className="w-[44px] shrink-0 pt-0.5">Magnifier</span>
        <Spin v="100%" c="w-[91px]" />
        <span className="ml-[9px] w-[45px] shrink-0 pt-0.5">Rotation</span>
        <Spin v="0.0 °" c="w-[86px]" />
        <div className="ml-[7px]"><Check on /></div>
        <span className="ml-[5px] w-[48px] shrink-0">Render</span>
        <Ic n="crs" c="w-3.5 h-3.5" />
        <span className="ml-[6px] w-[67px] shrink-0 pt-0.5">EPSG:32651</span>
        <Ic n="bubble" />
      </div>
    </div>
  );
}
